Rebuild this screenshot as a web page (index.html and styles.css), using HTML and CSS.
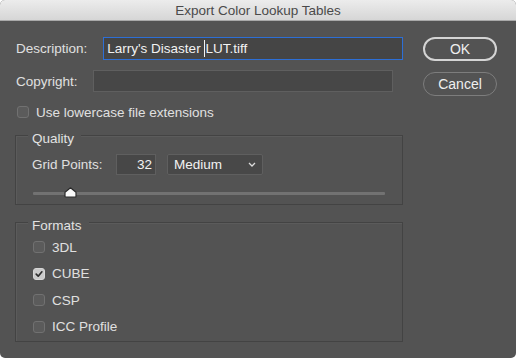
FILE: index.html
```html
<!DOCTYPE html>
<html lang="en">
<head>
  <meta charset="UTF-8" />
  <title>Export Color Lookup Tables</title>
  <link rel="stylesheet" href="styles.css">
</head>
<body>
<div class="window">
  <!-- Title bar -->
  <div class="titlebar">Export Color Lookup Tables</div>

  <div class="content">
    <div class="main">
      <div class="field-row">
        <label class="label">Description:</label>
        <div class="text-input focused">Larry's Disaster <span class="caret"></span>LUT.tiff</div>
      </div>
      <div class="field-row second">
        <label class="label">Copyright:</label>
        <div class="text-input"></div>
      </div>

      <div class="check-row top-check">
        <span class="checkbox"></span>
        <span>Use lowercase file extensions</span>
      </div>

      <!-- Quality group -->
      <div class="group quality">
        <div class="group-title">Quality</div>
        <div class="grid-row">
          <span class="label">Grid Points:</span>
          <div class="num-input">32</div>
          <div class="select">
            <span>Medium</span>
            <svg width="8" height="5" viewBox="0 0 8 5"><polyline points="1,1 4,4 7,1" fill="none" stroke="#dcdcdc" stroke-width="1.3"/></svg>
          </div>
        </div>
        <div class="slider">
          <div class="track"></div>
          <svg class="thumb" width="13" height="11" viewBox="0 0 13 11">
            <path d="M6.5 0.8 L12 5.2 V9.2 Q12 10.2 11 10.2 H2 Q1 10.2 1 9.2 V5.2 Z" fill="#fafafa" stroke="#2b2b2b" stroke-width="1.2" stroke-linejoin="round"/>
          </svg>
        </div>
      </div>

      <!-- Formats group -->
      <div class="group formats">
        <div class="group-title">Formats</div>
        <div class="format-list">
          <div class="check-row"><span class="checkbox"></span><span>3DL</span></div>
          <div class="check-row">
            <span class="checkbox checked">
              <svg width="10" height="10" viewBox="0 0 10 10"><polyline points="2.2,5.2 4.2,7.2 7.9,2.8" fill="none" stroke="#2e2e2e" stroke-width="1.7" stroke-linecap="round" stroke-linejoin="round"/></svg>
            </span>
            <span>CUBE</span>
          </div>
          <div class="check-row"><span class="checkbox"></span><span>CSP</span></div>
          <div class="check-row"><span class="checkbox"></span><span>ICC Profile</span></div>
        </div>
      </div>
    </div>

    <!-- Buttons -->
    <div class="buttons">
      <div class="btn default">OK</div>
      <div class="btn">Cancel</div>
    </div>
  </div>
</div>
</body>
</html>
```

FILE: styles.css
```css
body {
  margin: 0;
  background: #fff;
  font-family: "Liberation Sans", Arial, sans-serif;
  font-size: 13.5px;
  color: #e0e0e0;
}

.window {
  width: 516px;
  height: 358px;
  background: #535353;
  border-radius: 5px;
  overflow: hidden;
}

/* Title bar */
.titlebar {
  height: 21px;
  line-height: 21px;
  text-align: center;
  background: linear-gradient(#ececec, #d6d6d6);
  border-bottom: 1px solid #a9a9a9;
  box-sizing: border-box;
  color: #4a4a4a;
  font-size: 13.5px;
}

.content {
  display: flex;
  gap: 20px;
  padding: 16px 0 0 15px;
}
.main {
  width: 388px;
}

/* Text fields */
.field-row {
  display: flex;
  align-items: center;
  gap: 15px;
  padding-left: 1px;
}
.field-row.second {
  margin-top: 10px;
}
.text-input {
  width: 300px;
  height: 22px;
  box-sizing: border-box;
  background: #474747;
  border: 1px solid #5f5f5f;
  padding: 0 3px;
  line-height: 20px;
  color: #f2f2f2;
  white-space: nowrap;
}
.text-input.focused {
  height: 23px;
  line-height: 21px;
  margin-left: 1px;
  background: #454545;
  border-color: #2d6fd6;
}
.caret {
  display: inline-block;
  width: 1px;
  height: 17px;
  background: #f2f2f2;
  vertical-align: -4px;
}

/* Checkboxes */
.check-row {
  display: flex;
  align-items: center;
  gap: 7px;
  height: 20px;
}
.check-row.top-check {
  height: 16px;
  margin-top: 12px;
  padding-left: 2px;
}
.checkbox {
  width: 12px;
  height: 12px;
  box-sizing: border-box;
  border: 1px solid #717171;
  border-radius: 3px;
  background: #5b5b5b;
  display: flex;
  align-items: center;
  justify-content: center;
}
.checkbox.checked {
  background: #cacaca;
  border-color: #d6d6d6;
}

/* Group boxes */
.group {
  border: 1px solid #434343;
  box-shadow: inset 1px 1px 0 #5b5b5b;
  padding: 0 16px 6px 16px;
}
.group.quality {
  margin-top: 15px;
}
.group.formats {
  margin-top: 17px;
  padding-bottom: 4px;
}
.group-title {
  display: table;
  margin: -5px 0 0 -4px;
  padding: 0 7px 0 4px;
  line-height: 15px;
  background: #535353;
  color: #e2e2e2;
}

.grid-row {
  display: flex;
  align-items: center;
  margin-top: 8px;
  height: 21px;
}
.grid-row .label {
  width: 84px;
}
.num-input {
  width: 40px;
  height: 21px;
  box-sizing: border-box;
  background: #474747;
  border: 1px solid #5f5f5f;
  text-align: right;
  padding-right: 3px;
  line-height: 19px;
  color: #f2f2f2;
}
.select {
  width: 96px;
  height: 21px;
  box-sizing: border-box;
  margin-left: 11px;
  background: #484848;
  border: 1px solid #5f5f5f;
  border-radius: 2px;
  display: flex;
  align-items: center;
  justify-content: space-between;
  padding: 0 6px 0 6px;
  color: #f2f2f2;
}

/* Slider */
.slider {
  position: relative;
  height: 10px;
  margin: 13px 1px 0 1px;
  display: flex;
  align-items: center;
}
.track {
  flex: 1;
  height: 3px;
  background: #727272;
  border-radius: 1px;
}
.thumb {
  position: absolute;
  left: 31px;
  top: -1px;
}

.format-list {
  display: flex;
  flex-direction: column;
  gap: 6.67px;
  margin-top: 4px;
  padding-left: 1px;
}

/* Buttons */
.buttons {
  display: flex;
  flex-direction: column;
  gap: 11px;
}
.btn {
  width: 74px;
  height: 24px;
  box-sizing: border-box;
  border: 1px solid #7d7d7d;
  border-radius: 12px;
  text-align: center;
  line-height: 22px;
  color: #efefef;
  font-size: 14px;
}
.btn.default {
  border: 2px solid #d4d4d4;
  line-height: 20px;
}
```
